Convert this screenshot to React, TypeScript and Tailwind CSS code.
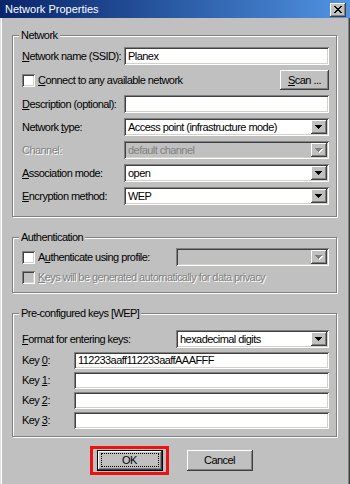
import React from "react";

const FONT =
  "font-['Liberation_Sans',Arial,sans-serif] text-[11px] tracking-[-0.55px] leading-[13px]";

const SUNKEN =
  "shadow-[inset_1px_1px_0_#808080,inset_-1px_-1px_0_#ffffff,inset_2px_2px_0_#404040,inset_-2px_-2px_0_#d4d0c8]";
const RAISED =
  "shadow-[inset_-1px_-1px_0_#404040,inset_1px_1px_0_#ffffff,inset_-2px_-2px_0_#808080]";
const GRAYTEXT = "text-[#808080] [text-shadow:1px_1px_0_#ffffff]";

function U({ children }: { children: React.ReactNode }) {
  return <span className="underline underline-offset-[1px]">{children}</span>;
}

function Tri({ disabled }: { disabled?: boolean }) {
  const rows = (fill: string, dx: number, dy: number) => (
    <g fill={fill} transform={`translate(${dx} ${dy})`}>
      <rect x="0" y="0" width="7" height="1" />
      <rect x="1" y="1" width="5" height="1" />
      <rect x="2" y="2" width="3" height="1" />
      <rect x="3" y="3" width="1" height="1" />
    </g>
  );
  return (
    <svg width="8" height="5" shapeRendering="crispEdges">
      {disabled && rows("#ffffff", 1, 1)}
      {rows(disabled ? "#808080" : "#000000", 0, 0)}
    </svg>
  );
}

function CloseX() {
  const rows: [number, number][][] = [
    [[0, 2], [6, 2]],
    [[1, 2], [5, 2]],
    [[2, 4]],
    [[3, 2]],
    [[2, 4]],
    [[1, 2], [5, 2]],
    [[0, 2], [6, 2]],
  ];
  return (
    <svg width="8" height="7" shapeRendering="crispEdges">
      {rows.map((r, y) =>
        r.map(([x, w], i) => <rect key={`${y}-${i}`} x={x} y={y} width={w} height="1" fill="#000" />)
      )}
    </svg>
  );
}

function Check({ disabled }: { disabled?: boolean }) {
  return (
    <div
      className={`w-[13px] h-[13px] shrink-0 ${disabled ? "bg-[#c0c0c0]" : "bg-white"} ${SUNKEN}`}
    />
  );
}

function TextInput({ value, tall }: { value?: string; tall?: boolean }) {
  return (
    <div
      className={`flex-1 ${tall ? "h-[18px]" : "h-[17px]"} bg-white ${SUNKEN} flex items-center pl-[4px] overflow-hidden whitespace-nowrap`}
    >
      {value}
    </div>
  );
}

function Select({
  value,
  disabled,
  fixed,
}: {
  value?: string;
  disabled?: boolean;
  fixed?: boolean;
}) {
  return (
    <div
      className={`${fixed ? "w-[153px] ml-auto" : "flex-1"} h-[18px] ${
        disabled ? "bg-[#c0c0c0]" : "bg-white"
      } ${SUNKEN} flex p-[2px]`}
    >
      <div
        className={`flex-1 flex items-center pl-[2px] whitespace-nowrap overflow-hidden ${
          disabled ? "text-[#808080]" : ""
        }`}
      >
        {value}
      </div>
      <div className={`w-[16px] h-full bg-[#c0c0c0] ${RAISED} flex items-center justify-center`}>
        <Tri disabled={disabled} />
      </div>
    </div>
  );
}

function Group({
  title,
  className,
  children,
}: {
  title: string;
  className: string;
  children: React.ReactNode;
}) {
  return (
    <div
      className={`relative border border-[#808080] shadow-[inset_1px_1px_0_#ffffff,1px_1px_0_#ffffff] ${className}`}
    >
      <div className="absolute left-[6px] top-[-7px] px-[2px] bg-[#c0c0c0] whitespace-nowrap">
        {title}
      </div>
      {children}
    </div>
  );
}

export default function App() {
  return (
    <div className={`w-[350px] h-[484px] bg-[#c0c0c0] flex flex-col overflow-hidden text-black ${FONT}`}>
      {/* Title bar */}
      <div className="h-[18px] shrink-0 flex items-center justify-between bg-linear-to-r from-[#0a246a] to-[#5294e2] pl-[5px] pr-[4px] pt-[1px]">
        <span className="text-white tracking-normal">Network Properties</span>
        <div className={`w-[16px] h-[14px] bg-[#c0c0c0] ${RAISED} flex items-center justify-center`}>
          <CloseX />
        </div>
      </div>

      <div className="flex-1 flex border-l border-l-[#e0e0e0] border-r border-r-[#404040]">
        <div className="flex-1 flex flex-col border-l border-l-white border-r border-r-[#808080] pl-[10px] pr-[11px] pt-[17px]">
          {/* Network */}
          <Group title="Network" className="pt-[11px] pb-[11px] pl-[9px] pr-[7px]">
            <div className="flex flex-col gap-[5px]">
              <div className="flex items-center h-[18px]">
                <div className="w-[102px] shrink-0 whitespace-nowrap">
                  <U>N</U>etwork name (SSID):
                </div>
                <TextInput value="Planex" tall />
              </div>
              <div className="flex items-center h-[20px]">
                <Check />
                <span className="ml-[3px]">
                  <U>C</U>onnect to any available network
                </span>
                <div
                  className={`ml-auto w-[49px] h-[20px] bg-[#c0c0c0] ${RAISED} flex items-center justify-center`}
                >
                  <span>
                    <U>S</U>can ...
                  </span>
                </div>
              </div>
              <div className="flex items-center h-[18px]">
                <div className="w-[102px] shrink-0 whitespace-nowrap">
                  <U>D</U>escription (optional):
                </div>
                <TextInput tall />
              </div>
              <div className="flex items-center h-[18px]">
                <div className="w-[102px] shrink-0">
                  Network <U>t</U>ype:
                </div>
                <Select value="Access point (infrastructure mode)" />
              </div>
              <div className="flex items-center h-[18px]">
                <div className={`w-[102px] shrink-0 ${GRAYTEXT}`}>Channel:</div>
                <Select value="default channel" disabled />
              </div>
              <div className="flex items-center h-[18px]">
                <div className="w-[102px] shrink-0">
                  <U>A</U>ssociation mode:
                </div>
                <Select value="open" />
              </div>
              <div className="flex items-center h-[18px]">
                <div className="w-[102px] shrink-0">
                  <U>E</U>ncryption method:
                </div>
                <Select value="WEP" />
              </div>
            </div>
          </Group>

          {/* Authentication */}
          <Group title="Authentication" className="mt-[20px] pt-[10px] pb-[8px] pl-[9px] pr-[7px]">
            <div className="flex flex-col gap-[4px]">
              <div className="flex items-center h-[18px]">
                <Check />
                <span className="ml-[3px]">
                  A<U>u</U>thenticate using profile:
                </span>
                <Select disabled fixed />
              </div>
              <div className="flex items-center h-[14px]">
                <Check disabled />
                <span className={`ml-[3px] whitespace-nowrap ${GRAYTEXT}`}>
                  <U>K</U>eys will be generated automatically for data privacy
                </span>
              </div>
            </div>
          </Group>

          {/* Pre-configured keys */}
          <Group title="Pre-configured keys [WEP]" className="mt-[20px] pt-[16px] pb-[7px] pl-[9px] pr-[7px]">
            <div className="flex items-center h-[18px]">
              <span>
                <U>F</U>ormat for entering keys:
              </span>
              <Select value="hexadecimal digits" fixed />
            </div>
            <div className="flex flex-col gap-[3px] mt-[4px]">
              {[
                ["0", "112233aaff112233aaffAAAFFF"],
                ["1", ""],
                ["2", ""],
                ["3", ""],
              ].map(([n, v]) => (
                <div key={n} className="flex items-center h-[17px]">
                  <div className="w-[52px] shrink-0">
                    Key <U>{n}</U>:
                  </div>
                  <TextInput value={v} />
                </div>
              ))}
            </div>
          </Group>

          {/* Buttons */}
          <div className="mt-[13px] flex justify-center gap-[24px]">
            <div className="relative w-[66px] h-[21px]">
              <div className="absolute -left-[7px] -top-[4px] -right-[6px] -bottom-[4px] border-[3px] border-[#ee1111]" />
              <div className="relative w-full h-full border border-black">
                <div className={`w-full h-full bg-[#c0c0c0] ${RAISED} flex items-center justify-center`}>
                  OK
                </div>
                <div className="absolute left-[3px] right-[3px] top-[2px] bottom-[3px] border border-dotted border-black" />
              </div>
            </div>
            <div
              className={`w-[66px] h-[21px] bg-[#c0c0c0] ${RAISED} flex items-center justify-center`}
            >
              Cancel
            </div>
          </div>
        </div>
      </div>
    </div>
  );
}
